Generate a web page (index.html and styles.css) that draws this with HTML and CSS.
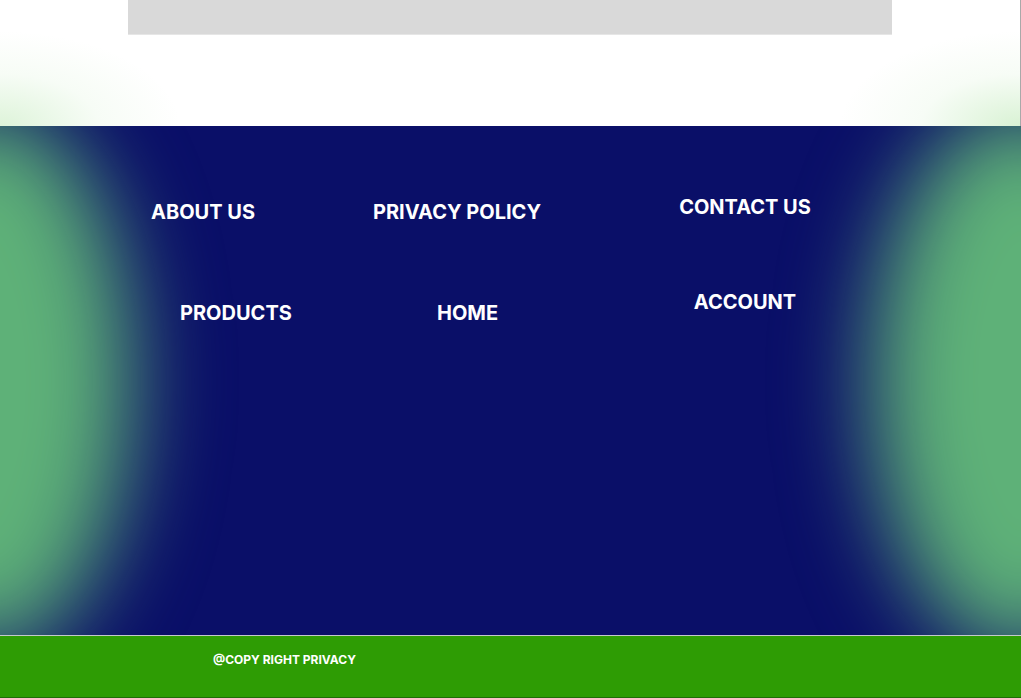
FILE: index.html
```html
<!DOCTYPE html>
<html lang="en">
<head>
<meta charset="utf-8">
<title>Footer</title>
<link rel="stylesheet" href="styles.css">
</head>
<body>
<div class="page">
  <header class="top">
    <div class="banner"></div>
  </header>
  <section class="links">
    <div class="glow glow-left"></div>
    <div class="glow glow-right"></div>
    <nav class="nav">
      <div class="col col1">
        <a class="link" href="#">ABOUT US</a>
        <a class="link products" href="#">PRODUCTS</a>
      </div>
      <div class="col col2">
        <a class="link" href="#">PRIVACY POLICY</a>
        <a class="link home" href="#">HOME</a>
      </div>
      <div class="col col3">
        <a class="link" href="#">CONTACT US</a>
        <a class="link" href="#">ACCOUNT</a>
      </div>
    </nav>
  </section>
  <footer class="bottom">
    <p class="copy">@COPY RIGHT PRIVACY</p>
  </footer>
</div>
</body>
</html>
```

FILE: styles.css
```css
* { box-sizing: border-box; }

html, body {
  margin: 0;
  padding: 0;
  background: #ffffff;
  overflow: hidden;
}

body {
  font-family: "Inter", "Liberation Sans", sans-serif;
}

.page {
  width: 1021px;
  height: 698px;
  position: relative;
  overflow: hidden;
}

.top {
  position: relative;
  z-index: 2;
  height: 126px;
  border-right: 1px solid #a9a9a9;
  background:
    radial-gradient(ellipse 180px 95px at 0% 100%, rgba(175, 228, 165, 0.42), rgba(175, 228, 165, 0.1) 55%, rgba(175, 228, 165, 0) 100%),
    radial-gradient(ellipse 180px 95px at 100% 100%, rgba(175, 228, 165, 0.48), rgba(175, 228, 165, 0.1) 55%, rgba(175, 228, 165, 0) 100%),
    #ffffff;
}

.banner {
  margin-left: 128px;
  width: 764px;
  height: 35px;
  background: #d9d9d9;
  border-bottom: 1px solid #e6e6e6;
}

.links {
  position: relative;
  z-index: 1;
  height: 509px;
  background: #0a0f68;
  overflow: hidden;
}

.glow {
  position: absolute;
  background: #5eb178;
  filter: blur(45px);
  border-radius: 50%;
}

.glow-left {
  left: -160px;
  top: -20px;
  width: 292px;
  height: 550px;
}

.glow-right {
  left: 872px;
  top: -20px;
  width: 300px;
  height: 550px;
}

.nav {
  position: relative;
  display: flex;
  padding-top: 74px;
  padding-left: 151px;
}

.col {
  display: flex;
  flex-direction: column;
}

.col1 {
  width: 222px;
  align-items: flex-start;
  gap: 77px;
}

.col2 {
  width: 272px;
  align-items: flex-start;
  gap: 77px;
}

.col3 {
  width: 200px;
  align-items: center;
  gap: 71px;
  margin-top: -5px;
}

.link {
  display: block;
  color: #ffffff;
  text-decoration: none;
  font-size: 20px;
  line-height: 24px;
  font-weight: 700;
}

.products { margin-left: 29px; }
.home { margin-left: 64px; }

.bottom {
  position: relative;
  z-index: 2;
  height: 63px;
  background: #2e9c04;
  border-top: 1px solid #c3cacb;
  border-bottom: 1px solid #1f6e08;
  padding-left: 213px;
}

.copy {
  margin: 0;
  padding-top: 16px;
  color: #ffffff;
  font-size: 12px;
  line-height: 15px;
  font-weight: 700;
}
```
